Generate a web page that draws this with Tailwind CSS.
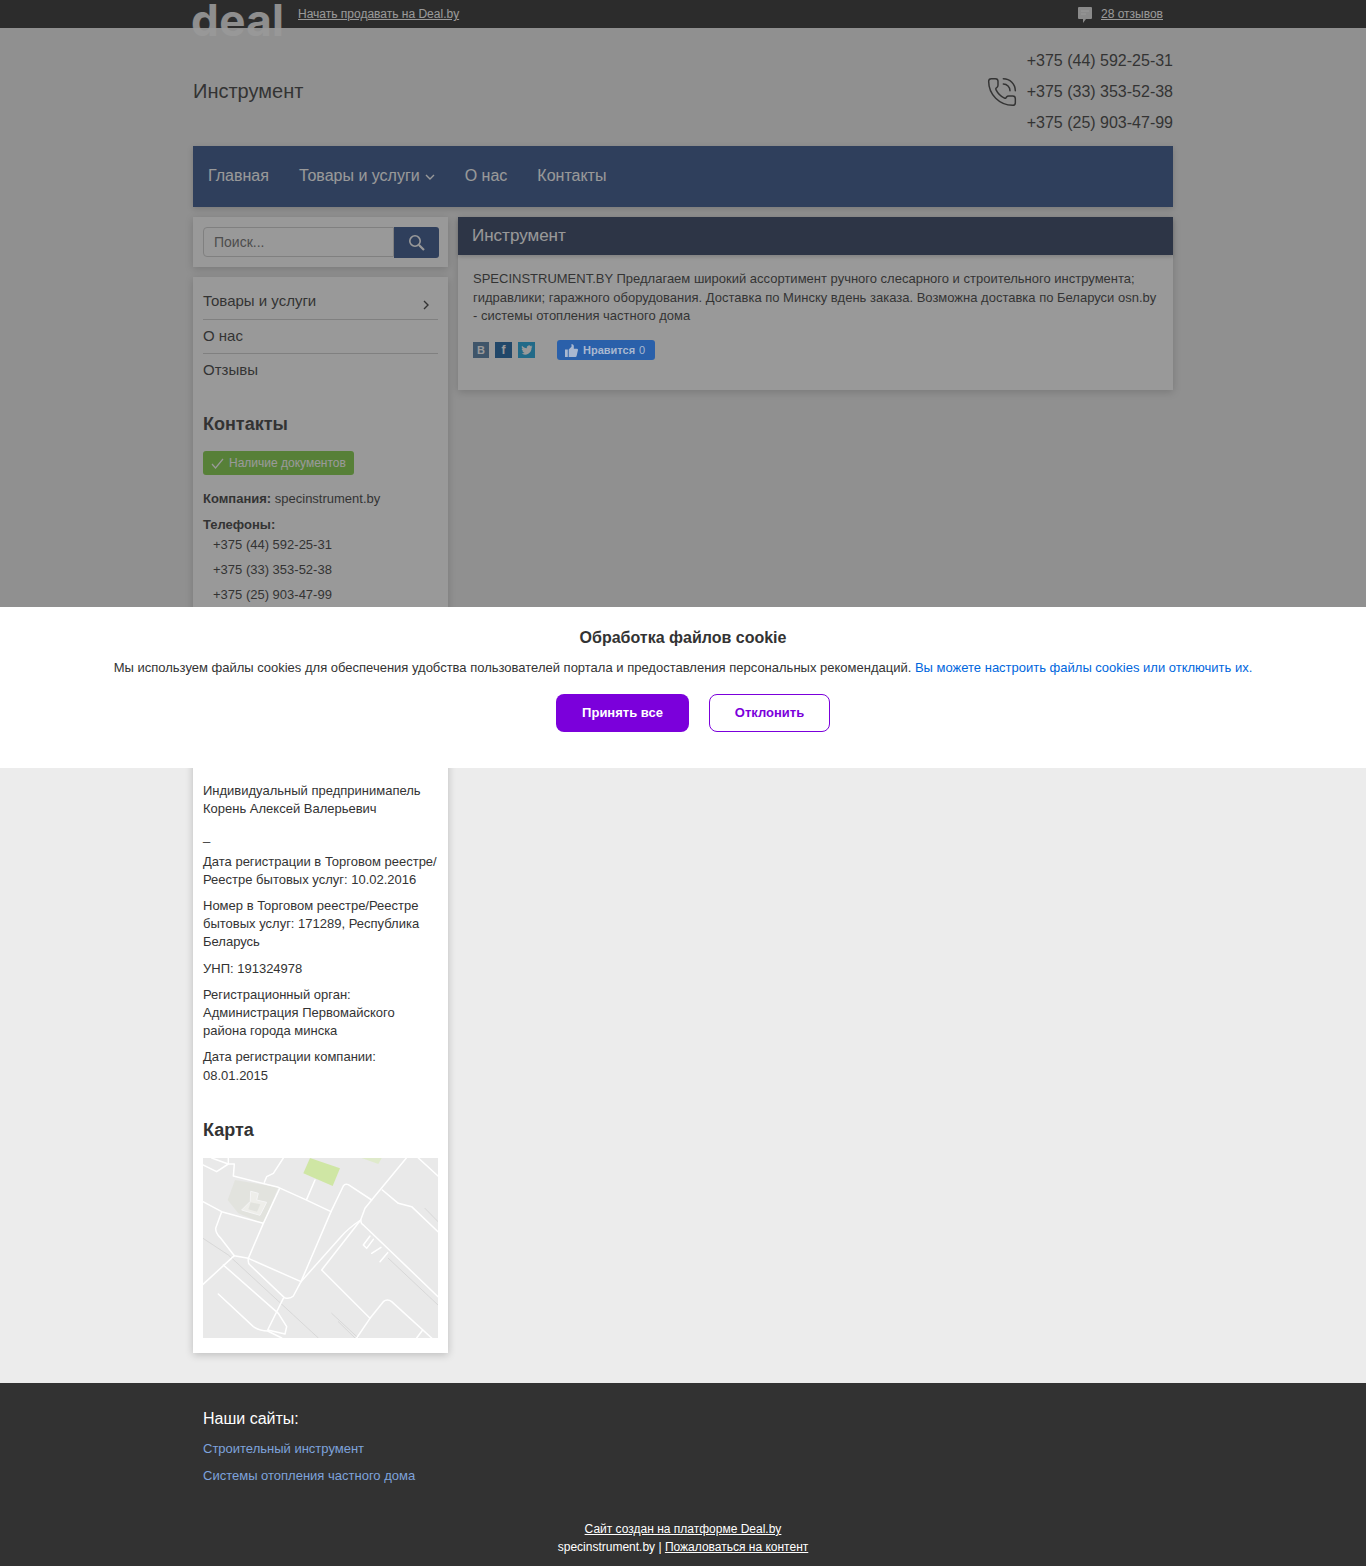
<!DOCTYPE html>
<html lang="ru">

<head>
    <meta charset="UTF-8">
    <meta name="viewport" content="width=device-width, initial-scale=1.0">
    <title>Инструмент</title>
    <script src="https://cdn.jsdelivr.net/npm/@tailwindcss/browser@4"></script>
</head>

<body class="relative bg-[#ececec] text-[#333] text-[13px] font-['Liberation_Sans',Arial,sans-serif]">

    <!-- Top bar -->
    <div class="h-7 bg-[#242424]">
        <div class="relative w-[980px] mx-auto h-7 flex items-center text-xs text-[#fff]">
            <span class="absolute left-[-2px] top-0 font-['Inter',sans-serif] font-bold text-[44px] leading-[40px] tracking-[0.4px] text-white/90">deal</span>
            <a href="#" class="ml-[105px] underline">Начать продавать на Deal.by</a>
            <div class="ml-auto mr-[10px] flex items-center">
                <svg class="w-[14px] h-[17px] mr-[9px]" viewBox="0 0 14 17"><path d="M1 1h12a1 1 0 0 1 1 1v10a1 1 0 0 1-1 1H8l-3 4v-4H1a1 1 0 0 1-1-1V2a1 1 0 0 1 1-1z" fill="#e0e0e0"/><path d="M3 5h8M3 8h5" stroke="#fff" stroke-width="1"/></svg>
                <a href="#" class="underline">28 отзывов</a>
            </div>
        </div>
    </div>

    <div class="w-[980px] mx-auto">
        <!-- Header -->
        <header class="h-[118px] flex items-center justify-between">
            <div class="text-xl mt-[8px]">Инструмент</div>
            <div class="flex items-center mt-[8px]">
                <svg class="w-[32px] h-[32px] mr-[9px] mt-[2px]" viewBox="0 0 24 24" fill="none" stroke="#333" stroke-width="1.1" stroke-linecap="round" stroke-linejoin="round"><path d="M13 2a9 9 0 0 1 9 9"/><path d="M13 6a5 5 0 0 1 5 5"/><path d="M13.832 16.568a1 1 0 0 0 1.213-.303l.355-.465A2 2 0 0 1 17 15h3a2 2 0 0 1 2 2v3a2 2 0 0 1-2 2A18 18 0 0 1 2 4a2 2 0 0 1 2-2h3a2 2 0 0 1 2 2v3a2 2 0 0 1-.8 1.6l-.468.351a1 1 0 0 0-.292 1.233 14 14 0 0 0 6.392 6.384"/></svg>
                <div class="text-base leading-[31px] text-right">
                    <div>+375 (44) 592-25-31</div>
                    <div>+375 (33) 353-52-38</div>
                    <div>+375 (25) 903-47-99</div>
                </div>
            </div>
        </header>

        <!-- Nav -->
        <nav class="h-[61px] bg-[#2b4b85] shadow-[0_2px_6px_rgba(0,0,0,0.2)] flex items-center text-base text-white mb-[10px] pb-[2px]">
            <a href="#" class="px-[15px]">Главная</a>
            <a href="#" class="px-[15px] flex items-center">Товары и услуги
                <svg class="w-[10px] h-[6px] ml-[5px] mt-[3px]" viewBox="0 0 10 6" fill="none" stroke="#fff" stroke-width="1.4"><path d="M1 1l4 4 4-4"/></svg>
            </a>
            <a href="#" class="px-[15px]">О нас</a>
            <a href="#" class="px-[15px]">Контакты</a>
        </nav>

        <div class="flex gap-[10px] items-start">
            <!-- Left column -->
            <aside class="w-[255px] shrink-0">
                <div class="h-[50px] bg-white shadow-[0_2px_8px_rgba(0,0,0,0.2)] mb-[10px] pl-[10px] pt-[10px] flex items-start">
                    <input type="text" placeholder="Поиск..." class="w-[191px] h-[30px] shrink-0 px-[10px] text-sm bg-white border border-[#ccc] rounded-l-[4px] placeholder:text-[#666]">
                    <button class="w-[45px] h-[31px] shrink-0 bg-[#2b4b85] rounded-r-[3px] flex items-center justify-center">
                        <svg class="w-[17px] h-[17px]" viewBox="0 0 17 17" fill="none" stroke="#fff" stroke-width="1.6"><circle cx="7" cy="7" r="5.2"/><path d="M11 11l5 5" stroke-width="2.2"/></svg>
                    </button>
                </div>

                <div class="h-[1076px] bg-white shadow-[0_2px_8px_rgba(0,0,0,0.2)] px-[10px] pt-[8px]">
                    <ul class="text-[15px]">
                        <li class="h-[35px] border-b border-[#ccc] flex items-center justify-between pb-[1px]">Товары и услуги
                            <svg class="w-[6px] h-[10px] mr-[9px] mt-[6px]" viewBox="0 0 6 10" fill="none" stroke="#333" stroke-width="1.4"><path d="M1 1l4 4-4 4"/></svg>
                        </li>
                        <li class="h-[34px] border-b border-[#ccc] flex items-center">О нас</li>
                        <li class="h-[33px] flex items-center">Отзывы</li>
                    </ul>

                    <h3 class="mt-[25px] text-lg font-bold leading-[24px]">Контакты</h3>
                    <div class="mt-[15px] w-[151px] h-[24px] bg-[#7bcd3d] rounded-[3px] flex items-center text-xs text-white pl-[8px]">
                        <svg class="w-[13px] h-[11px] mr-[5px]" viewBox="0 0 13 11" fill="none" stroke="#fff" stroke-width="1.2"><path d="M1 6l3.500 4L12 1"/></svg>
                        Наличие документов
                    </div>
                    <p class="mt-[15px] leading-[18px]"><b>Компания:</b> specinstrument.by</p>
                    <p class="mt-[8px] leading-[18px] font-bold">Телефоны:</p>
                    <div class="pl-[10px] leading-[25px] mt-[-2px]">
                        <div>+375 (44) 592-25-31</div>
                        <div>+375 (33) 353-52-38</div>
                        <div>+375 (25) 903-47-99</div>
                    </div>

                    <!-- this part sits under the cookie banner -->
                    <div class="h-[175px]"></div>

                    <p class="leading-[18px]">Индивидуальный предпринимапель<br>Корень Алексей Валерьевич</p>
                    <p class="mt-[9px] leading-[18px]">_</p>
                    <p class="mt-[8px] leading-[18px]">Дата регистрации в Торговом реестре/<br>Реестре бытовых услуг: 10.02.2016</p>
                    <p class="mt-[8px] leading-[18px]">Номер в Торговом реестре/Реестре<br>бытовых услуг: 171289, Республика<br>Беларусь</p>
                    <p class="mt-[9px] leading-[18px]">УНП: 191324978</p>
                    <p class="mt-[8px] leading-[18px]">Регистрационный орган:<br>Администрация Первомайского<br>района города минска</p>
                    <p class="mt-[8px] leading-[18.5px]">Дата регистрации компании:<br>08.01.2015</p>

                    <h3 class="mt-[33px] text-lg font-bold leading-[24px]">Карта</h3>
                    <svg class="mt-[16px] w-[235px] h-[180px] bg-[#e9e9e9]" viewBox="24 24 705 540" fill="none" stroke-linejoin="round" stroke-linecap="round">
                        <path d="M120 90L250 112L205 220L130 190L98 150Z" fill="#e2e3de"/>
                        <path d="M168 124L190 130L185 150L215 157L195 196L140 180L165 155Z" fill="#eeeeea" stroke="#f5f5f5" stroke-width="3"/>
                        <path d="M167 157L196 163L186 185L160 178Z" fill="#e2e3de"/>
                        <path d="M345 24L435 55L413 108L325 70Z" fill="#cfe6a4"/>
                        <path d="M500 24H560L550 42Z" fill="#dfeacb"/>
                        <g stroke="#cfcfcf" stroke-width="2">
                            <path d="M24 265L100 315L370 564"/>
                            <path d="M410 490L490 564"/>
                            <path d="M430 515L480 564"/>
                            <path d="M690 175L729 215"/>
                            <path d="M580 325L729 465"/>
                        </g>
                        <g stroke="#fff" stroke-width="4.500">
                            <path d="M24 45L65 65L100 42L50 24"/>
                            <path d="M100 24V42H118L115 78L250 112L330 148L408 185"/>
                            <path d="M265 24L235 70L215 80L208 97"/>
                            <path d="M254 115L205 220L160 325Q158 340 165 345L268 443Q285 448 295 438L318 395L408 185L445 108Q450 100 460 104L530 150L634 24"/>
                            <path d="M24 155L80 185L205 220"/>
                            <path d="M80 185L62 235Q62 250 75 262L118 317L160 325L318 395"/>
                            <path d="M118 317L24 403"/>
                            <path d="M85 345L250 490L275 530L270 552L218 540L265 445"/>
                            <path d="M70 432L175 530Q195 543 218 543L260 564"/>
                            <path d="M360 90L335 148"/>
                            <path d="M530 150L510 175L497 210Q460 235 440 258L318 395"/>
                            <path d="M497 210Q498 222 505 225L729 440"/>
                            <path d="M497 210L380 360L525 505L485 564"/>
                            <path d="M525 505L565 455Q577 445 590 455L710 564"/>
                            <path d="M683 540L665 564"/>
                            <path d="M562 120L610 160L650 170L729 245"/>
                            <path d="M670 24L729 78"/>
                            <path d="M525 258L505 285L515 295L535 268M558 292L530 310M578 308L555 335"/>
                        </g>
                    </svg>
                </div>
            </aside>

            <!-- Main -->
            <main class="flex-1">
                <div class="bg-white shadow-[0_2px_8px_rgba(0,0,0,0.2)] h-[173px]">
                    <h1 class="h-[38px] bg-[#263658] text-white text-[17px] px-[14px] flex items-center shadow-[0_2px_4px_rgba(0,0,0,0.2)]">Инструмент</h1>
                    <p class="px-[15px] pt-[15px] leading-[18.5px]">SPECINSTRUMENT.BY Предлагаем широкий ассортимент ручного слесарного и строительного инструмента; гидравлики; гаражного оборудования. Доставка по Минску вдень заказа. Возможна доставка по Беларуси osn.by - системы отопления частного дома</p>
                    <div class="px-[15px] mt-[14.5px] flex items-center h-[20px]">
                        <span class="w-4 h-4 bg-[#4a76a0] text-white text-[11px] font-bold flex items-center justify-center mr-[6px]">B</span>
                        <span class="w-[17px] h-4 bg-[#0f5a9e] text-white text-[12px] font-bold flex items-center justify-center mr-[6px]">f</span>
                        <span class="w-[17px] h-4 bg-[#10a0dc] flex items-center justify-center mr-[22px]">
                            <svg class="w-3 h-3" viewBox="0 0 24 24" fill="#fff"><path d="M23 5c-.8.4-1.700.6-2.600.7.900-.6 1.600-1.400 2-2.500-.9.500-1.900.9-2.900 1.100a4.600 4.600 0 0 0-7.900 4.200C7.800 8.300 4.400 6.500 2.100 3.700c-1.200 2.100-.6 4.800 1.400 6.200-.7 0-1.400-.2-2.100-.6 0 2.200 1.600 4.200 3.700 4.600-.7.200-1.400.2-2.100.1.600 1.900 2.300 3.200 4.300 3.200A9.300 9.300 0 0 1 1 19.100 13 13 0 0 0 21.100 7.600c.8-.6 1.500-1.500 1.900-2.600z"/></svg>
                        </span>
                        <span class="relative z-10 w-[98px] h-[20px] bg-[#2a60aa] rounded-[3px] text-[#a9b8d0] text-[11px] flex items-center pl-[8px]">
                            <svg class="w-[13px] h-[13px] mr-[5px]" viewBox="0 0 14 14" fill="#a9b8d0"><path d="M0 6h3v8H0zM4 6l3-3V0c1.500 0 2.500 1 2.500 2.500V5H13c1 0 1 1 1 1.500L12.500 13c-.1.600-.6 1-1.200 1H4z"/></svg>
                            <b class="mr-[4px]">Нравится</b> 0
                        </span>
                    </div>
                </div>
            </main>
        </div>
    </div>

    <!-- Footer -->
    <footer class="mt-[30px] h-[183px] bg-[#323232] text-white">
        <div class="w-[980px] mx-auto px-[10px] pt-[26px]">
            <div class="text-base leading-[20px]">Наши сайты:</div>
            <a href="#" class="block mt-[10px] leading-[20px] text-[#7ea3dc]">Строительный инструмент</a>
            <a href="#" class="block mt-[7px] leading-[20px] text-[#7ea3dc]">Системы отопления частного дома</a>
        </div>
        <div class="mt-[34px] text-center text-xs leading-[18px]">
            <a href="#" class="underline">Сайт создан на платформе Deal.by</a><br>
            specinstrument.by | <a href="#" class="underline">Пожаловаться на контент</a>
        </div>
    </footer>

    <!-- Cookie overlay -->
    <div class="absolute top-0 left-0 w-full h-[607px] bg-[#333]/50"></div>
    <div class="absolute top-[607px] left-0 w-full h-[161px] bg-white text-center pt-[21px]">
        <div class="text-base font-bold leading-[20px]">Обработка файлов cookie</div>
        <p class="mt-[10px] leading-[20px] text-[13px]">Мы используем файлы cookies для обеспечения удобства пользователей портала и предоставления персональных рекомендаций. <a href="#" class="text-[#0066dd]">Вы можете настроить файлы cookies или отключить их.</a></p>
        <div class="mt-[16px] ml-5 flex justify-center gap-5">
            <button class="w-[133px] h-[38px] bg-[#7b00db] text-white font-bold rounded-lg">Принять все</button>
            <button class="w-[121px] h-[38px] bg-white border border-[#7b00db] text-[#7b00db] font-bold rounded-lg">Отклонить</button>
        </div>
    </div>

</body>

</html>
